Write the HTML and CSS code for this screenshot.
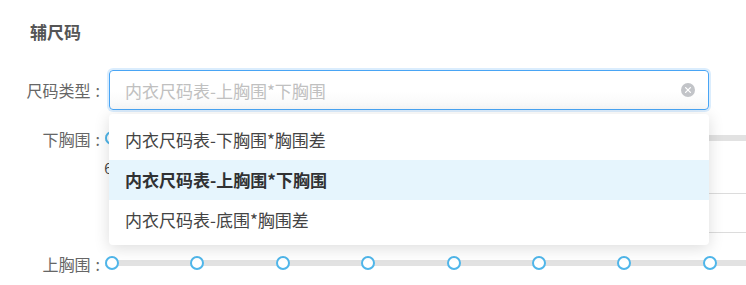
FILE: index.html
```html
<!DOCTYPE html>
<html lang="zh-CN">
<head>
    <meta charset="UTF-8">
    <title>辅尺码</title>
    <link rel="stylesheet" href="styles.css">
</head>
<body>
    <div class="panel">
        <div class="panel-title">辅尺码</div>

        <!-- 尺码类型 -->
        <div class="form-row">
            <div class="form-label">尺码类型<span class="colon">:</span></div>
            <div class="select">
                <div class="select-input">
                    <span class="placeholder">内衣尺码表-上胸围*下胸围</span>
                    <svg class="clear-icon" width="14" height="14" viewBox="0 0 14 14">
                        <circle cx="7" cy="7" r="7" fill="#c2c4c8"/>
                        <path d="M4.6 4.6 L9.4 9.4 M9.4 4.6 L4.6 9.4" stroke="#fff" stroke-width="1.3" stroke-linecap="round"/>
                    </svg>
                </div>
                <div class="dropdown">
                    <div class="dropdown-item">内衣尺码表-下胸围*胸围差</div>
                    <div class="dropdown-item selected">内衣尺码表-上胸围*下胸围</div>
                    <div class="dropdown-item">内衣尺码表-底围*胸围差</div>
                </div>
            </div>
        </div>

        <!-- 下胸围 -->
        <div class="slider-row">
            <div class="form-label">下胸围<span class="colon">:</span></div>
            <div class="slider slider-wide" id="lowerSlider"></div>
        </div>

        <div class="table-lines"></div>

        <!-- 上胸围 -->
        <div class="slider-row">
            <div class="form-label">上胸围<span class="colon">:</span></div>
            <div class="slider" id="upperSlider"></div>
        </div>
    </div>

    <script>
        // build the stops for each slider
        function buildSlider(id, start, count) {
            const slider = document.getElementById(id);
            for (let i = 0; i < count; i++) {
                const col = document.createElement('div');
                col.className = 'stop';
                col.innerHTML = '<div class="dot"></div><div class="tick">' + (start + i * 5) + '</div>';
                slider.appendChild(col);
            }
        }

        buildSlider('lowerSlider', 60, 6);
        buildSlider('upperSlider', 70, 10);
    </script>
</body>
</html>
```

FILE: styles.css
```css
body {
    margin: 0;
    font-family: "Noto Sans CJK SC", "Noto Sans", sans-serif;
    background: #fff;
    color: #606266;
    overflow: hidden;
}

.panel {
    padding-top: 22px;
}

.panel-title {
    margin-left: 30px;
    height: 20px;
    line-height: 20px;
    font-size: 17px;
    font-weight: bold;
    color: #555;
}

/* form rows */
.form-row {
    display: flex;
    align-items: center;
    margin-top: 28px;
}

.form-label {
    width: 100px;
    flex-shrink: 0;
    text-align: right;
    font-size: 16px;
    color: #666;
}

.colon {
    margin-left: 5px;
}

.select {
    position: relative;
    margin-left: 9px;
    width: 600px;
}

.select-input {
    display: flex;
    align-items: center;
    justify-content: space-between;
    height: 40px;
    box-sizing: border-box;
    padding: 0 13px 0 15px;
    border: 1px solid #49a5f5;
    border-radius: 4px;
    background: linear-gradient(to bottom, #fff 0%, #fff 55%, #f7f7f7 100%);
    box-shadow: 0 0 0 2px rgba(74, 165, 245, 0.2);
}

.placeholder {
    font-size: 17px;
    color: #c0c0c0;
}

.clear-icon {
    display: block;
}

/* dropdown menu over the rows below */
.dropdown {
    position: absolute;
    top: 100%;
    left: 0;
    right: 0;
    margin-top: 4px;
    padding: 6px 0 5px;
    background: #fff;
    border-radius: 4px;
    box-shadow: 0 3px 16px rgba(0, 0, 0, 0.14);
    z-index: 10;
}

.dropdown-item {
    height: 40px;
    line-height: 40px;
    padding: 0 16px;
    font-size: 17px;
    color: #444;
}

.dropdown-item.selected {
    background: #e6f5fd;
    font-weight: bold;
    color: #303133;
}

/* sliders */
.slider-row {
    display: flex;
    align-items: flex-start;
}

.form-row + .slider-row {
    margin-top: 16px;
}

.slider-row .form-label {
    height: 24px;
    line-height: 26px;
}

.slider {
    display: flex;
    flex: 1;
    margin-left: 5px;
    padding-top: 5px;
    background: linear-gradient(#e2e2e2, #e2e2e2) 0 9px / 100% 6px no-repeat;
}

.stop {
    width: 14px;
    margin-right: 71.4px;
    display: flex;
    flex-direction: column;
    align-items: center;
    flex-shrink: 0;
}

.slider-wide .stop {
    margin-right: 86px;
}

.dot {
    width: 14px;
    height: 14px;
    box-sizing: border-box;
    border: 2px solid #4fb6ea;
    border-radius: 50%;
    background: #fff;
}

.tick {
    margin-top: 13px;
    font-size: 14px;
    line-height: 20px;
    color: #444;
    white-space: nowrap;
}

.table-lines {
    margin: 15px 0 18px 109px;
    height: 38px;
    border-top: 1px solid #dcdcdc;
    border-bottom: 1px solid #dcdcdc;
}
```
